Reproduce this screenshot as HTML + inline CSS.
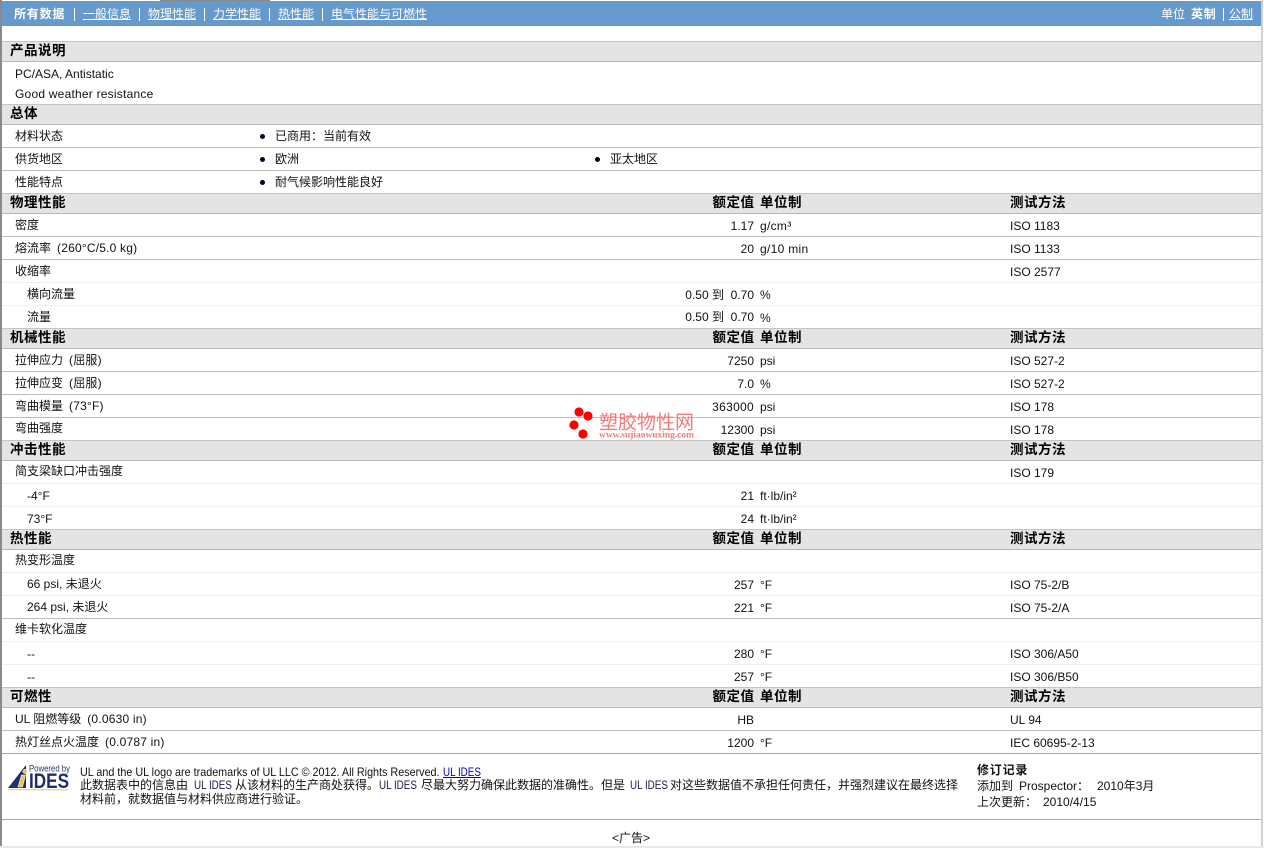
<!DOCTYPE html>
<html lang="zh"><head><meta charset="utf-8"><title>产品数据表</title>
<style>
html,body{margin:0;padding:0;background:#fff}
body{width:1264px;height:848px;position:relative;overflow:hidden;font:12px/14px "Liberation Sans","WenQuanYi Zen Hei","Noto Sans CJK SC",sans-serif;color:#111}
div.t,div.b,div.l,div.f,div.r,div.d{position:absolute}
.t{white-space:nowrap}
.r{white-space:nowrap;right:510px;text-align:right}
.b{left:2px;width:1259px;height:19px;background:#e4e4e4;border-top:1px solid #c4c4c4;border-bottom:1px solid #b8b8b8}
.l{left:2px;width:1259px;height:1px;background:#bdbdbd}
.f{left:2px;width:1259px;height:1px;background:#f0f0f0}
.d{width:5px;height:5px;border-radius:50%;background:#000028}
.h{font-weight:bold;font-size:13.5px;color:#000;letter-spacing:.5px}
.r.h{right:509.5px}
.p{margin-left:6px;letter-spacing:.2px}
.s{letter-spacing:.3px}
.n a,.n b,.n span{position:absolute;top:6px;color:#fff;white-space:nowrap}
.n a{text-decoration:underline}
.n b{letter-spacing:.8px}
.n i{position:absolute;top:7px;width:1px;height:13px;background:#fff}
.u{transform:scaleX(.82);transform-origin:0 50%;color:#1a1a4a}
</style></head><body>
<div style="position:absolute;left:0;top:0;width:2px;height:848px;background:#8a8a8a"></div>
<div style="position:absolute;left:1261px;top:0;width:2px;height:848px;background:#d0d0d0"></div>
<div style="position:absolute;left:160px;top:0;width:110px;height:1px;background:#888"></div>
<div class="n" style="position:absolute;left:2px;top:1px;width:1259px;height:25px;background:#6699cc">
<b style="left:12px">所有数据</b><i style="left:72px"></i><a style="left:81px">一般信息</a><i style="left:137px"></i><a style="left:146px">物理性能</a><i style="left:202px"></i><a style="left:211px">力学性能</a><i style="left:267px"></i><a style="left:276px">热性能</a><i style="left:320px"></i><a style="left:329px">电气性能与可燃性</a>
<span style="left:1159px">单位</span><b style="left:1189px">英制</b><i style="left:1221px"></i><a style="left:1227px">公制</a>
</div>

<div class="b" style="top:41px"></div><div class="t h" style="left:10px;top:44px">产品说明</div>
<div class="t" style="left:15px;top:67px">PC/ASA, Antistatic</div>
<div class="t" style="left:15px;top:87px;letter-spacing:.22px">Good weather resistance</div>

<div class="b" style="top:104px"></div><div class="t h" style="left:10px;top:107px">总体</div>
<div class="t" style="left:15px;top:129px">材料状态</div><div class="d" style="left:260px;top:134px"></div><div class="t" style="left:275px;top:129px">已商用：当前有效</div>
<div class="l" style="top:147px"></div>
<div class="t" style="left:15px;top:152px">供货地区</div><div class="d" style="left:260px;top:157px"></div><div class="t" style="left:275px;top:152px">欧洲</div><div class="d" style="left:595px;top:157px"></div><div class="t" style="left:610px;top:152px">亚太地区</div>
<div class="l" style="top:170px"></div>
<div class="t" style="left:15px;top:175px">性能特点</div><div class="d" style="left:260px;top:180px"></div><div class="t" style="left:275px;top:175px">耐气候影响性能良好</div>

<div class="b" style="top:193px"></div><div class="t h" style="left:10px;top:196px">物理性能</div>
<div class="r h" style="top:196px">额定值</div><div class="t h" style="left:760px;top:196px">单位制</div><div class="t h" style="left:1010px;top:196px">测试方法</div>
<div class="t" style="left:15px;top:218px">密度</div><div class="r" style="top:219px">1.17</div><div class="t s" style="left:760px;top:219px">g/cm³</div><div class="t" style="left:1010px;top:219px">ISO 1183</div>
<div class="l" style="top:236px"></div>
<div class="t" style="left:15px;top:241px">熔流率<span class="p">(260°C/5.0 kg)</span></div><div class="r" style="top:242px">20</div><div class="t s" style="left:760px;top:242px">g/10 min</div><div class="t" style="left:1010px;top:242px">ISO 1133</div>
<div class="l" style="top:259px"></div>
<div class="t" style="left:15px;top:264px">收缩率</div><div class="t" style="left:1010px;top:265px">ISO 2577</div>
<div class="f" style="top:282px"></div>
<div class="t" style="left:27px;top:287px">横向流量</div><div class="r" style="top:288px">0.50 到&nbsp; 0.70</div><div class="t" style="left:760px;top:288px">%</div>
<div class="f" style="top:305px"></div>
<div class="t" style="left:27px;top:310px">流量</div><div class="r" style="top:310px">0.50 到&nbsp; 0.70</div><div class="t" style="left:760px;top:311px">%</div>

<div class="b" style="top:328px"></div><div class="t h" style="left:10px;top:331px">机械性能</div>
<div class="r h" style="top:331px">额定值</div><div class="t h" style="left:760px;top:331px">单位制</div><div class="t h" style="left:1010px;top:331px">测试方法</div>
<div class="t" style="left:15px;top:353px">拉伸应力<span class="p">(屈服)</span></div><div class="r" style="top:354px">7250</div><div class="t" style="left:760px;top:354px">psi</div><div class="t" style="left:1010px;top:354px">ISO 527-2</div>
<div class="l" style="top:371px"></div>
<div class="t" style="left:15px;top:376px">拉伸应变<span class="p">(屈服)</span></div><div class="r" style="top:377px">7.0</div><div class="t" style="left:760px;top:377px">%</div><div class="t" style="left:1010px;top:377px">ISO 527-2</div>
<div class="l" style="top:394px"></div>
<div class="t" style="left:15px;top:399px">弯曲模量<span class="p">(73°F)</span></div><div class="r s" style="top:400px">363000</div><div class="t" style="left:760px;top:400px">psi</div><div class="t" style="left:1010px;top:400px">ISO 178</div>
<div class="l" style="top:417px"></div>
<div class="t" style="left:15px;top:421px">弯曲强度</div><div class="r" style="top:423px">12300</div><div class="t" style="left:760px;top:423px">psi</div><div class="t" style="left:1010px;top:423px">ISO 178</div>

<div class="b" style="top:440px"></div><div class="t h" style="left:10px;top:443px">冲击性能</div>
<div class="r h" style="top:443px">额定值</div><div class="t h" style="left:760px;top:443px">单位制</div><div class="t h" style="left:1010px;top:443px">测试方法</div>
<div class="t" style="left:15px;top:464px">简支梁缺口冲击强度</div><div class="t" style="left:1010px;top:466px">ISO 179</div>
<div class="f" style="top:483px"></div>
<div class="t" style="left:27px;top:489px">-4°F</div><div class="r" style="top:489px">21</div><div class="t" style="left:760px;top:489px">ft·lb/in²</div>
<div class="f" style="top:506px"></div>
<div class="t" style="left:27px;top:512px">73°F</div><div class="r" style="top:512px">24</div><div class="t" style="left:760px;top:512px">ft·lb/in²</div>

<div class="b" style="top:529px"></div><div class="t h" style="left:10px;top:532px">热性能</div>
<div class="r h" style="top:532px">额定值</div><div class="t h" style="left:760px;top:532px">单位制</div><div class="t h" style="left:1010px;top:532px">测试方法</div>
<div class="t" style="left:15px;top:553px">热变形温度</div>
<div class="f" style="top:572px"></div>
<div class="t" style="left:27px;top:577px">66 psi, 未退火</div><div class="r" style="top:578px">257</div><div class="t" style="left:760px;top:578px">°F</div><div class="t" style="left:1010px;top:578px">ISO 75-2/B</div>
<div class="f" style="top:595px"></div>
<div class="t" style="left:27px;top:600px">264 psi, 未退火</div><div class="r" style="top:601px">221</div><div class="t" style="left:760px;top:601px">°F</div><div class="t" style="left:1010px;top:601px">ISO 75-2/A</div>
<div class="l" style="top:618px"></div>
<div class="t" style="left:15px;top:622px">维卡软化温度</div>
<div class="f" style="top:641px"></div>
<div class="t" style="left:27px;top:647px">--</div><div class="r" style="top:647px">280</div><div class="t" style="left:760px;top:647px">°F</div><div class="t" style="left:1010px;top:647px">ISO 306/A50</div>
<div class="f" style="top:664px"></div>
<div class="t" style="left:27px;top:670px">--</div><div class="r" style="top:670px">257</div><div class="t" style="left:760px;top:670px">°F</div><div class="t" style="left:1010px;top:670px">ISO 306/B50</div>

<div class="b" style="top:687px"></div><div class="t h" style="left:10px;top:690px">可燃性</div>
<div class="r h" style="top:690px">额定值</div><div class="t h" style="left:760px;top:690px">单位制</div><div class="t h" style="left:1010px;top:690px">测试方法</div>
<div class="t" style="left:15px;top:712px">UL 阻燃等级<span class="p">(0.0630 in)</span></div><div class="r" style="top:713px">HB</div><div class="t" style="left:1010px;top:713px">UL 94</div>
<div class="l" style="top:730px"></div>
<div class="t" style="left:15px;top:735px">热灯丝点火温度<span class="p">(0.0787 in)</span></div><div class="r" style="top:736px">1200</div><div class="t" style="left:760px;top:736px">°F</div><div class="t" style="left:1010px;top:736px">IEC 60695-2-13</div>
<div class="l" style="top:753px;background:#a8a8a8"></div>

<svg style="position:absolute;left:6px;top:763px" width="66" height="30" viewBox="0 0 66 30">
<path d="M2 25 L20 2 L20 25 Z" fill="#1f2f6b"/>
<path d="M12 24 L15.5 12 L19.5 12 L16.5 24 Z" fill="#e8c64a" stroke="#fff" stroke-width=".6"/>
<circle cx="19" cy="8.5" r="2.2" fill="#e8c64a" stroke="#fff" stroke-width=".5"/>
<rect x="2" y="26" width="60" height="1.4" fill="#f0d68a"/>
<text x="23" y="8.5" font-family="Liberation Sans" font-size="9" fill="#2a3a70" textLength="41" lengthAdjust="spacingAndGlyphs">Powered by</text>
<text x="23" y="25" font-family="Liberation Sans" font-size="21" font-weight="bold" fill="#1f2f6b" textLength="40" lengthAdjust="spacingAndGlyphs">IDES</text>
</svg>
<div class="t" style="left:80px;top:765px;transform:scaleX(.898);transform-origin:0 50%">UL and the UL logo are trademarks of UL LLC © 2012. All Rights Reserved.</div>
<div class="t" style="left:443px;top:765px;transform:scaleX(.82);transform-origin:0 50%"><a style="color:#00c;text-decoration:underline">UL IDES</a></div>
<div class="t" style="left:80px;top:778px">此数据表中的信息由</div>
<div class="t u" style="left:194px;top:778px">UL IDES</div>
<div class="t" style="left:235px;top:778px">从该材料的生产商处获得。</div>
<div class="t u" style="left:379px;top:778px">UL IDES</div>
<div class="t" style="left:421px;top:778px">尽最大努力确保此数据的准确性。但是</div>
<div class="t u" style="left:630px;top:778px">UL IDES</div>
<div class="t" style="left:670px;top:778px">对这些数据值不承担任何责任，并强烈建议在最终选择</div>
<div class="t" style="left:80px;top:792px">材料前，就数据值与材料供应商进行验证。</div>
<div class="t" style="left:977px;top:763px;font-weight:bold;letter-spacing:.8px">修订记录</div>
<div class="t" style="left:977px;top:779px">添加到</div>
<div class="t" style="left:1019px;top:779px">Prospector：</div>
<div class="t" style="left:1097px;top:779px">2010年3月</div>
<div class="t" style="left:977px;top:795px">上次更新：</div>
<div class="t" style="left:1043px;top:795px">2010/4/15</div>
<div class="l" style="top:819px;background:#a8a8a8"></div>
<div class="t" style="left:612px;top:831px">&lt;广告&gt;</div>
<div style="position:absolute;left:0;top:846px;width:1264px;height:2px;background:#e8e8e8"></div>

<svg style="position:absolute;left:565px;top:403px" width="135" height="40" viewBox="0 0 135 40">
<circle cx="14" cy="9" r="4.6" fill="#f00"/><circle cx="23" cy="13" r="4.6" fill="#f00"/><circle cx="9" cy="22" r="4.6" fill="#f00"/><circle cx="18" cy="31" r="4.6" fill="#f00"/>
<text x="34" y="25.5" font-family="Noto Sans CJK SC,sans-serif" font-size="19" fill="#f47a7a" textLength="95" lengthAdjust="spacingAndGlyphs">塑胶物性网</text>
<text x="34" y="34.5" font-family="Liberation Serif,serif" font-size="9" font-weight="bold" fill="#f47a7a" textLength="95" lengthAdjust="spacingAndGlyphs">www.sujiaowuxing.com</text>
</svg>
</body></html>
